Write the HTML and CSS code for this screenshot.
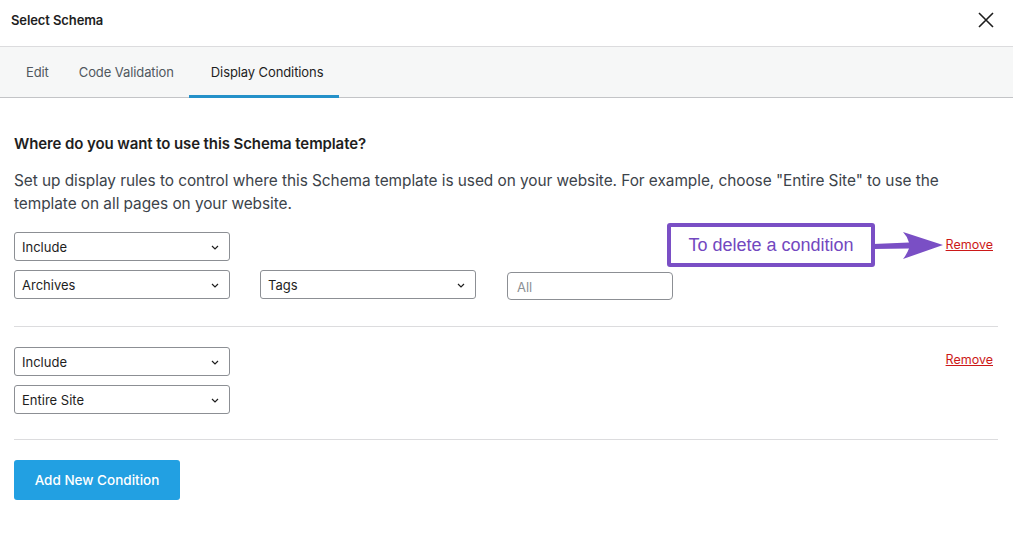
FILE: index.html
```html
<!DOCTYPE html>
<html>
<head>
<meta charset="utf-8">
<link rel="stylesheet" href="styles.css">
</head>
<body>
<div class="modal">
  <div class="header">
    <span class="title">Select Schema</span>
    <svg class="close" width="16" height="16" viewBox="0 0 16 16"><path d="M1 1L15 15M15 1L1 15" stroke="#1e1e1e" stroke-width="1.6" fill="none"/></svg>
  </div>
  <div class="tabs">
    <span class="tab">Edit</span>
    <span class="tab">Code Validation</span>
    <span class="tab active">Display Conditions</span>
  </div>
  <div class="content">
    <h2 class="heading">Where do you want to use this Schema template?</h2>
    <p class="desc">Set up display rules to control where this Schema template is used on your website. For example, choose "Entire Site" to use the template on all pages on your website.</p>

    <div class="group first">
      <div class="group-top">
        <div class="select"><span>Include</span><svg class="chev" width="8" height="5" viewBox="0 0 8 5"><path d="M1 1L4 4L7 1" stroke="#1e1e1e" stroke-width="1.2" fill="none"/></svg></div>
        <a class="remove">Remove</a>
      </div>
      <div class="row">
        <div class="select"><span>Archives</span><svg class="chev" width="8" height="5" viewBox="0 0 8 5"><path d="M1 1L4 4L7 1" stroke="#1e1e1e" stroke-width="1.2" fill="none"/></svg></div>
        <div class="select"><span>Tags</span><svg class="chev" width="8" height="5" viewBox="0 0 8 5"><path d="M1 1L4 4L7 1" stroke="#1e1e1e" stroke-width="1.2" fill="none"/></svg></div>
        <div class="input">All</div>
      </div>
      <div class="annotation">
        <div class="note">To delete a condition</div>
        <svg class="arrow" width="70" height="32" viewBox="0 0 70 32"><path d="M0 14 L36 12.5 Q34 6 30 2 L70 15 L30 29 Q34 24 36 18.5 L0 19 Z" fill="#7a4fc5"/></svg>
      </div>
    </div>

    <div class="group">
      <div class="group-top">
        <div class="select"><span>Include</span><svg class="chev" width="8" height="5" viewBox="0 0 8 5"><path d="M1 1L4 4L7 1" stroke="#1e1e1e" stroke-width="1.2" fill="none"/></svg></div>
        <a class="remove">Remove</a>
      </div>
      <div class="row">
        <div class="select"><span>Entire Site</span><svg class="chev" width="8" height="5" viewBox="0 0 8 5"><path d="M1 1L4 4L7 1" stroke="#1e1e1e" stroke-width="1.2" fill="none"/></svg></div>
      </div>
    </div>

    <button class="add">Add New Condition</button>
  </div>
</div>
</body>
</html>
```

FILE: styles.css
```css
* { box-sizing: border-box; }
html, body { margin: 0; padding: 0; background: #fff; }
body { font-family: Inter, "Noto Sans", "Liberation Sans", sans-serif; color: #1e1e1e; }
.modal { width: 1013px; height: 534px; overflow: hidden; }
.header {
  height: 47px; display: flex; align-items: center; justify-content: space-between;
  padding: 0 19px 6px 11px; border-bottom: 1px solid #dcdcde;
}
.title { font-size: 13px; font-weight: 600; letter-spacing: -0.1px; }
.tabs {
  height: 51px; background: #f6f7f7; border-bottom: 1px solid #c3c4c7;
  display: flex; padding-left: 11px;
}
.tab {
  font-size: 13px; color: #50575e; padding: 2px 15px 0; display: flex; align-items: center;
  border-bottom: 3px solid transparent; margin-bottom: -1px; letter-spacing: -0.1px;
}
.tab.active { color: #1e1e1e; border-bottom-color: #2591c9; padding: 2px 16px 0 22px; }
.content { padding: 0 15px 0 14px; }
.heading { font-size: 15px; font-weight: 600; margin: 36px 0 0; line-height: 20px; letter-spacing: -0.1px; }
.desc { font-size: 15.4px; color: #3c434a; line-height: 23px; margin: 15px 0 0; letter-spacing: -0.05px; }
.group { position: relative; padding: 20px 0 25px; border-bottom: 1px solid #dcdcde; }
.group.first { padding-top: 17px; padding-bottom: 26px; }
.group-top { display: flex; justify-content: space-between; align-items: center; }
.row { display: flex; gap: 30px; margin-top: 9px; align-items: flex-start; }
.select {
  width: 216px; height: 29px; border: 1px solid #8c8f94; border-radius: 3px;
  display: flex; align-items: center; justify-content: space-between;
  padding: 0 10px 0 7px; font-size: 13px; color: #1e1e1e; background: #fff;
}
.chev { margin-top: 1px; }
.input {
  width: 166px; height: 28px; border: 1px solid #8c8f94; border-radius: 4px;
  margin-top: 2px; margin-left: 1px;
  display: flex; align-items: center; padding: 2px 9px 0; font-size: 13px; color: #8c8f94;
}
.remove { font-size: 12.5px; color: #cc1818; text-decoration: underline; margin-right: 5px; margin-top: -4px; cursor: pointer; }
.annotation { position: absolute; left: 653px; top: 8px; display: flex; align-items: center; }
.note {
  width: 208px; height: 44px; border: 4px solid #7a4fc5; border-radius: 3px;
  color: #7248c0; font-size: 18px; display: flex; align-items: center; justify-content: center;
  background: #fff; font-family: "Liberation Sans", Arial, sans-serif;
}
.arrow { margin-left: -2px; margin-top: 2px; }
.add {
  margin-top: 20px; background: #22a0e2; color: #fff; border: none; border-radius: 3px;
  height: 40px; width: 166px; font-size: 13.5px; font-family: inherit; font-weight: 500;
}
```
